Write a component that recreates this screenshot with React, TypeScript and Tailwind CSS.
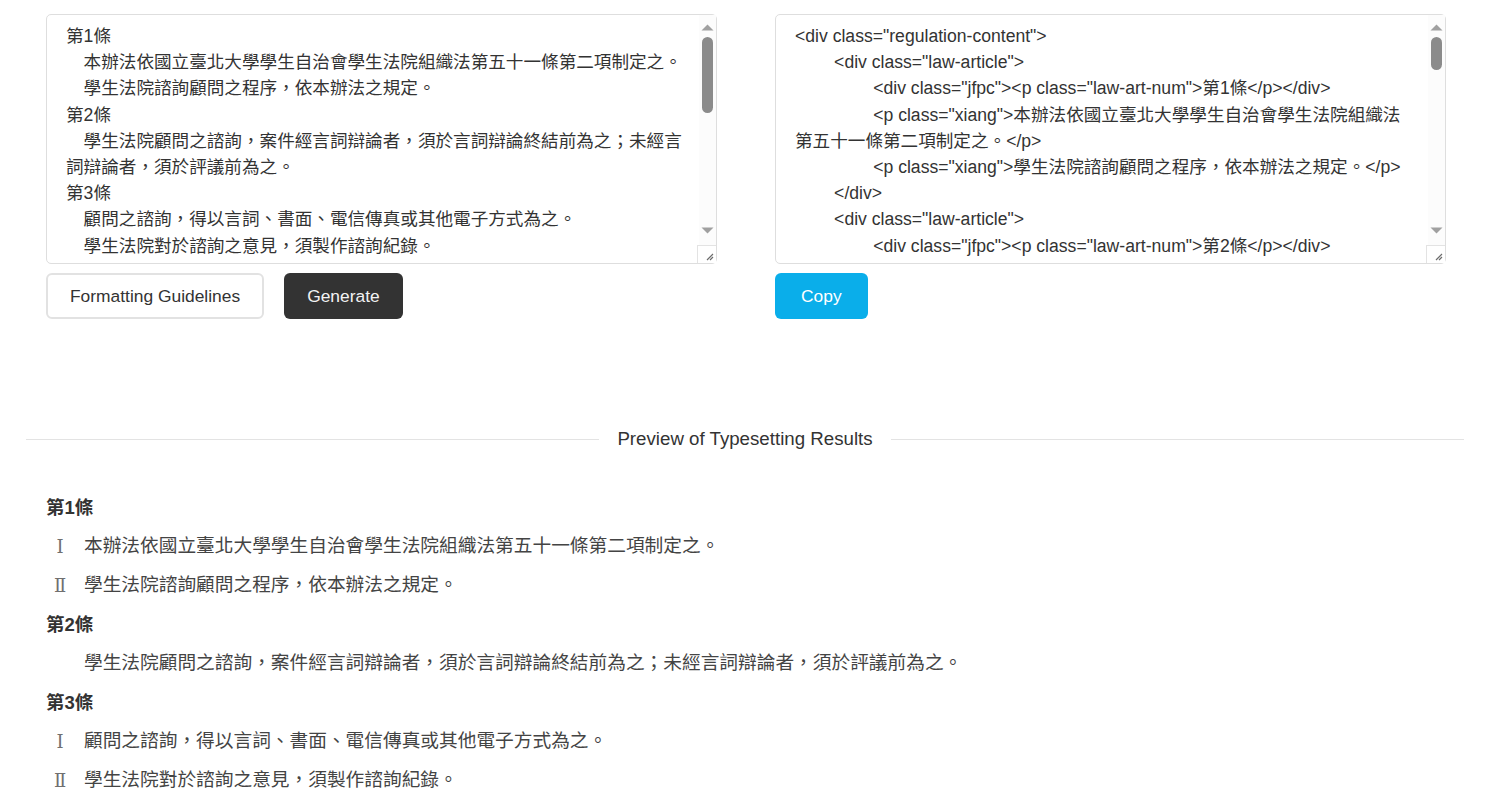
import React from 'react';

const articles = [
  {
    num: '第1條',
    items: [
      '本辦法依國立臺北大學學生自治會學生法院組織法第五十一條第二項制定之。',
      '學生法院諮詢顧問之程序，依本辦法之規定。',
    ],
  },
  {
    num: '第2條',
    items: ['學生法院顧問之諮詢，案件經言詞辯論者，須於言詞辯論終結前為之；未經言詞辯論者，須於評議前為之。'],
  },
  {
    num: '第3條',
    items: [
      '顧問之諮詢，得以言詞、書面、電信傳真或其他電子方式為之。',
      '學生法院對於諮詢之意見，須製作諮詢紀錄。',
    ],
  },
];

// Raw source shown in the left box
const sourceText = articles.map(a => [a.num, ...a.items.map(i => '　' + i)].join('\n')).join('\n');

// Generated markup shown in the right box
const htmlText = [
  '<div class="regulation-content">',
  ...articles.flatMap(a => [
    '\t<div class="law-article">',
    `\t\t<div class="jfpc"><p class="law-art-num">${a.num}</p></div>`,
    ...a.items.map(i => `\t\t<p class="xiang">${i}</p>`),
    '\t</div>',
  ]),
  '</div>',
].join('\n');

const numerals = ['Ⅰ', 'Ⅱ', 'Ⅲ', 'Ⅳ'];

const font = "font-['Liberation_Sans','Noto_Sans_CJK_TC',sans-serif]";

// Classic scrollbar drawn over the textarea (headless browser hides native ones)
function FakeScrollbar({ thumbHeight }: { thumbHeight: number }) {
  return (
    <div className="absolute right-[1px] top-[1px] bottom-[1px] w-[17px] bg-[#fcfcfc] pointer-events-none">
      <svg className="absolute left-[2px] top-[9px]" width="13" height="7" viewBox="0 0 13 7">
        <path d="M0.5 6.5 L6.5 0.5 L12.5 6.5 Z" fill="#a0a0a0" />
      </svg>
      <div className="absolute left-[3px] top-[22px] w-[11px] rounded-full bg-[#8b8b8b]" style={{ height: thumbHeight }} />
      <svg className="absolute left-[2px] bottom-[29px]" width="13" height="7" viewBox="0 0 13 7">
        <path d="M0.5 0.5 L6.5 6.5 L12.5 0.5 Z" fill="#a0a0a0" />
      </svg>
      <div className="absolute -left-[2px] right-0 bottom-0 h-[18px] border-t border-l border-[#e3e3e3] bg-white">
        <svg className="absolute right-[2px] bottom-[2px]" width="10" height="10" viewBox="0 0 10 10">
          <path d="M9 3 L3 9 M9 6 L6 9" stroke="#6b6b6b" strokeWidth="1.2" />
        </svg>
      </div>
    </div>
  );
}

const boxBase =
  "block w-full h-[250px] border border-[#dedede] rounded-[5px] pl-[19px] pt-[8px] pb-[8px] text-[17.6px] leading-[26.2px] text-[#333] resize-none overflow-hidden outline-none [tab-size:8] font-['Liberation_Sans','Noto_Sans_CJK_TC',sans-serif]";

export default function App() {
  return (
    <div className={`min-h-screen bg-white text-[#333] ${font}`}>
      {/* Editors */}
      <div className="grid grid-cols-2 gap-[58px] pl-[46px] pr-[44px] pt-[14px]">
        <div>
          <div className="relative">
            <textarea readOnly value={sourceText} className={`${boxBase} pr-[28px]`} />
            <FakeScrollbar thumbHeight={76} />
          </div>
          <div className="flex gap-[20px] mt-[9px]">
            <button className="h-[46px] px-[22px] border-2 border-[#e2e2e2] rounded-[6px] bg-white text-[17.4px] text-[#333]">
              Formatting Guidelines
            </button>
            <button className="h-[46px] px-[23px] rounded-[6px] bg-[#333333] text-[17.4px] text-[#f2f2f2]">
              Generate
            </button>
          </div>
        </div>
        <div>
          <div className="relative">
            <textarea readOnly value={htmlText} className={`${boxBase} pr-[36px]`} />
            <FakeScrollbar thumbHeight={33} />
          </div>
          <div className="flex mt-[9px]">
            <button className="h-[46px] px-[26px] rounded-[6px] bg-[#0aaeea] text-[17.4px] text-white">
              Copy
            </button>
          </div>
        </div>
      </div>

      {/* Preview divider */}
      <div className="flex items-center gap-[18px] px-[26px] mt-[107px]">
        <div className="flex-1 h-px bg-[#e3e3e3]" />
        <span className="text-[18.7px] text-[#333] leading-[26px]">Preview of Typesetting Results</span>
        <div className="flex-1 h-px bg-[#e3e3e3]" />
      </div>

      {/* Preview */}
      <div className="px-[46px] pt-[36px]">
        {articles.map(article => (
          <div key={article.num}>
            <p className="h-[39px] leading-[39px] text-[18.5px] font-bold text-[#333]">{article.num}</p>
            {article.items.map((item, idx) => (
              <div key={idx} className="flex h-[39px] items-center">
                <span className="w-[28px] mr-[10px] text-center text-[18px] text-[#707070] font-['DejaVu_Serif','Liberation_Serif',serif]">
                  {article.items.length > 1 ? numerals[idx] : ''}
                </span>
                <span className="text-[18.7px] text-[#444]">{item}</span>
              </div>
            ))}
          </div>
        ))}
      </div>
    </div>
  );
}
